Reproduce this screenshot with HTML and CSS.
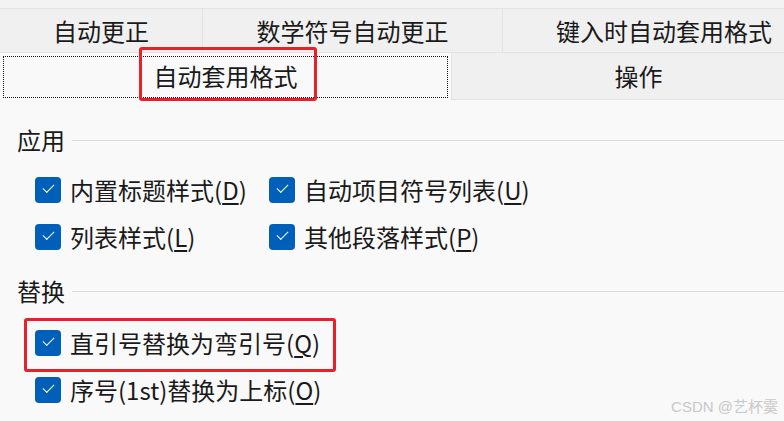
FILE: index.html
```html
<!DOCTYPE html>
<html lang="zh-CN">
<head>
  <meta charset="UTF-8" />
  <title>自动更正</title>
  <link rel="stylesheet" href="styles.css">
</head>
<body>
  <div class="tabs">
    <div class="tab-row top">
      <div class="tab t1">自动更正</div>
      <div class="tab t2">数学符号自动更正</div>
      <div class="tab t3">键入时自动套用格式</div>
    </div>
    <div class="tab-row bottom">
      <div class="tab active">
        <div class="focus">自动套用格式</div>
        <span class="mark tab-mark"></span>
      </div>
      <div class="tab t5">操作</div>
    </div>
  </div>

  <div class="panel">
    <div class="group-title first"><span>应用</span></div>
    <div class="grid">
      <label class="opt"><span class="box"></span><span>内置标题样式(<u>D</u>)</span></label>
      <label class="opt"><span class="box"></span><span>自动项目符号列表(<u>U</u>)</span></label>
      <label class="opt"><span class="box"></span><span>列表样式(<u>L</u>)</span></label>
      <label class="opt"><span class="box"></span><span>其他段落样式(<u>P</u>)</span></label>
    </div>

    <div class="group-title second"><span>替换</span></div>
    <div class="list">
      <label class="opt"><span class="box"></span><span>直引号替换为弯引号(<u>Q</u>)</span><span class="mark row-mark"></span></label>
      <label class="opt"><span class="box"></span><span>序号(1st)替换为上标(<u>O</u>)</span></label>
    </div>
  </div>

  <div class="watermark">CSDN @艺杯霙</div>
</body>
</html>
```
FILE: styles.css
```css
* { box-sizing:border-box; margin:0; padding:0; }
body {
  width:784px; height:421px; overflow:hidden;
  background:#f9f9f9; color:#1a1a1a;
  font-family:"Noto Sans CJK SC","Noto Sans",sans-serif;
  font-size:24px;
  position:relative;
}
.tabs {
  background:#f3f3f3;
  padding-top:8px;
  overflow-x:clip;
}
.tab-row { display:flex; }
.tab-row.top {
  height:45px;
  border-top:1px solid #e3e3e3;
  border-bottom:1px solid #e3e3e3;
}
.tab-row.bottom { height:47px; }
.tab {
  flex:none;
  display:flex; align-items:center; justify-content:center;
  background:#f0f0f0;
  line-height:1;
}
.t1 { width:203px; border-right:1px solid #e3e3e3; }
.t2 { width:300px; border-right:1px solid #e3e3e3; }
.t3 { width:322px; }
.active {
  width:451px;
  background:#f9f9f9;
  padding:3px 3px 2px 3px;
  position:relative;
  align-items:stretch;
}
.focus {
  flex:1;
  border:1px dotted #111;
  display:flex; align-items:center; justify-content:center;
  padding-bottom:2px;
}
.t5 {
  width:374px;
  border-left:1px solid #e3e3e3;
  border-bottom:1px solid #e3e3e3;
}
.mark {
  position:absolute;
  border:3px solid #e8202a;
  border-radius:3px;
  pointer-events:none;
}
.tab-mark { left:139px; top:-6px; width:178px; height:54px; }

.panel { padding-left:17px; }
.group-title {
  display:flex; align-items:center; gap:7px;
  height:32px; line-height:32px;
}
.group-title::after {
  content:""; flex:1; height:1px; background:#dcdcdc;
}
.group-title.first { margin-top:24px; }
.group-title.second { margin-top:15px; }
.grid {
  margin-top:10px; margin-left:18px;
  display:grid; grid-template-columns:234px auto;
}
.list { margin-top:12px; margin-left:18px; }
.opt {
  display:flex; align-items:center; gap:9px;
  height:47px; position:relative;
  white-space:nowrap;
}
.opt u {
  text-decoration-thickness:1.5px;
  text-underline-offset:3px;
}
.box {
  flex:none;
  width:26px; height:26px;
  border-radius:4px;
  background:#005fb8;
  position:relative;
}
.box::after {
  content:"";
  position:absolute;
  left:8px; top:7px;
  width:10px; height:5px;
  border-left:1.2px solid #fff;
  border-bottom:1.2px solid #fff;
  transform:rotate(-45deg);
}
.row-mark { left:-11px; top:-1px; width:312px; height:54px; }
.watermark {
  position:absolute; right:6px; bottom:5px;
  font-size:15px; color:#c8c8c8;
  font-family:"Liberation Sans","Noto Sans CJK SC",sans-serif;
}
```
